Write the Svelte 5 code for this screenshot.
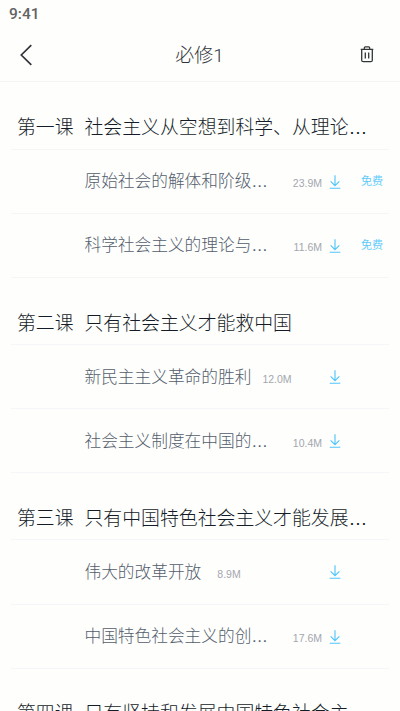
<script>
  const lessons = [
    {
      no: '第一课',
      title: '社会主义从空想到科学、从理论…',
      items: [
        { name: '原始社会的解体和阶级…', size: '23.9M', free: true },
        { name: '科学社会主义的理论与…', size: '11.6M', free: true }
      ]
    },
    {
      no: '第二课',
      title: '只有社会主义才能救中国',
      items: [
        { name: '新民主主义革命的胜利', size: '12.0M' },
        { name: '社会主义制度在中国的…', size: '10.4M' }
      ]
    },
    {
      no: '第三课',
      title: '只有中国特色社会主义才能发展…',
      items: [
        { name: '伟大的改革开放', size: '8.9M' },
        { name: '中国特色社会主义的创…', size: '17.6M' }
      ]
    },
    { no: '第四课', title: '只有坚持和发展中国特色社会主…', items: [] }
  ];

  // Untruncated names keep the size label close to the text
  const isCut = (name) => name.endsWith('…');
</script>

<div class="screen">
  <div class="status">9:41</div>

  <header class="bar">
    <button class="back" aria-label="返回">
      <svg width="14" height="22" viewBox="0 0 14 22">
        <path d="M11.3 1.2 1.3 11l10 9.8" />
      </svg>
    </button>
    <h1>必修1</h1>
    <button class="trash" aria-label="删除">
      <svg width="14" height="17" viewBox="0 0 14 17">
        <path d="M.7 3.4h12.6M4.3 3.2V1.9c0-.6.4-1 1-1h3.4c.6 0 1 .4 1 1v1.3M1.7 3.6v10.6c0 .9.6 1.5 1.5 1.5h7.6c.9 0 1.5-.6 1.5-1.5V3.6M5.3 6.4v6M8.7 6.4v6" />
      </svg>
    </button>
  </header>

  <main>
    {#each lessons as lesson}
      <section>
        <h2>
          <span class="no">{lesson.no}</span>
          <span class="title">{lesson.title}</span>
        </h2>
        {#each lesson.items as item}
          <div class="item">
            <span class="name">{item.name}</span>
            <span class="size" class:end={isCut(item.name)} class:short={item.name.length < 10}>{item.size}</span>
            <svg class="download" width="12" height="14" viewBox="0 0 12 14">
              <path d="M6 .3v10.2M1.6 6.3 6 10.6l4.4-4.3M.7 13.2h10.6" />
            </svg>
            <span class="free">{item.free ? '免费' : ''}</span>
          </div>
        {/each}
      </section>
    {/each}
  </main>
</div>

<style>
  :global(body) {
    background: #fefefd;
  }

  .screen {
    box-sizing: border-box;
    height: 711px;
    overflow: hidden;
    background: #fefefd;
    font-family: 'Liberation Sans', 'Noto Sans CJK SC', sans-serif;
    font-weight: 300;
  }

  .status {
    height: 28px;
    padding-left: 9px;
    font: 500 15.5px/28px Roboto, sans-serif;
    color: #626365;
  }

  .bar {
    box-sizing: border-box;
    display: flex;
    align-items: center;
    justify-content: space-between;
    height: 54px;
    padding: 0 26px 0 20px;
    border-bottom: 1px solid #f5f5f5;
  }

  button {
    display: flex;
    padding: 0;
    border: 0;
    background: none;
  }

  svg {
    fill: none;
    stroke: #333638;
  }

  .back {
    width: 19px;
  }

  .back svg {
    stroke-width: 1.7;
  }

  .trash svg {
    stroke-width: 1.3;
  }

  h1 {
    margin: 0;
    padding-top: 2px;
    font: 300 19px/28px Roboto, 'Noto Sans CJK SC', sans-serif;
    color: #303338;
  }

  main {
    padding-top: 0.6px;
  }

  section {
    padding: 0 11px;
  }

  h2 {
    box-sizing: border-box;
    display: flex;
    height: 67px;
    margin: 0;
    padding: 31.6px 0 0 6px;
    border-bottom: 1px solid #f5f6f7;
    font-size: 18.87px;
    font-weight: 300;
    line-height: 28px;
    color: #141c28;
    white-space: nowrap;
  }

  .no {
    width: 67.5px;
    flex: none;
  }

  .item {
    box-sizing: border-box;
    display: flex;
    align-items: center;
    height: 64.2px;
    padding: 0 6px 0 73.5px;
    border-bottom: 1px solid #f5f6f7;
    white-space: nowrap;
  }

  .name {
    padding-top: 2px;
    font-size: 16.7px;
    line-height: 24px;
    color: #535d6c;
  }

  .size {
    margin: 4px auto 0 11px;
    font: 400 10.5px/14px 'Liberation Sans', sans-serif;
    color: #a3a7ae;
  }

  .size.short {
    margin-left: 16px;
  }

  .size.end {
    margin: 4px 7px 0 auto;
  }

  .download {
    flex: none;
    margin-top: 1px;
    stroke: #52c6fb;
    stroke-width: 1.15;
  }

  .free {
    width: 42px;
    flex: none;
    font-size: 11px;
    font-weight: 400;
    line-height: 16px;
    color: #62cbfa;
    text-align: right;
  }
</style>
